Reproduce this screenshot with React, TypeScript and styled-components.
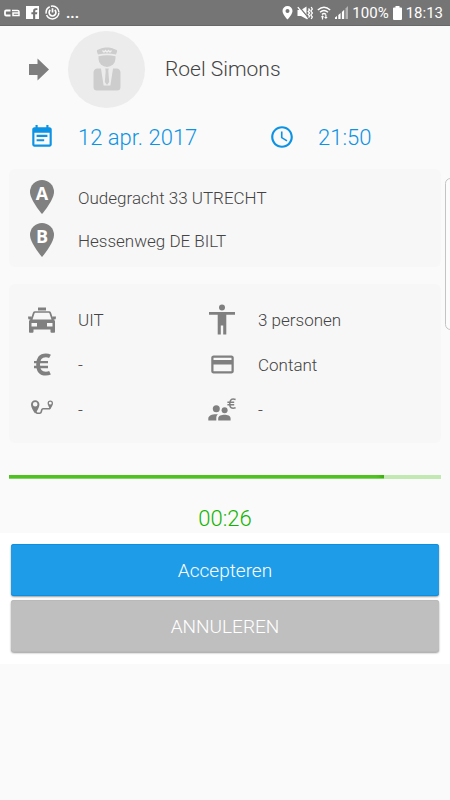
import React from 'react';
import styled, { createGlobalStyle } from 'styled-components';

const GlobalStyle = createGlobalStyle`
  *, *::before, *::after { box-sizing: border-box; }
  body {
    margin: 0;
    background: #fafafa;
    color: #444;
    font-family: Roboto, "Liberation Sans", sans-serif;
    font-weight: 300;
  }
`;

const Screen = styled.div`
  position: relative;
  min-height: 100vh;
  overflow: hidden;
`;

const StatusBar = styled.header`
  display: flex;
  align-items: center;
  justify-content: space-between;
  height: 26px;
  padding: 0 7px 0 4px;
  background: #757575;
  border-bottom: 1px solid #686868;
  color: #fff;
  font-size: 15px;
  font-weight: 400;
`;

const StatusGroup = styled.div<{ $gap: number }>`
  display: flex;
  align-items: center;
  gap: ${(p) => p.$gap}px;
`;

const Dots = styled.span`
  font-weight: 700;
  line-height: 16px;
`;

const Content = styled.main`
  padding: 0 9px;
`;

const Driver = styled.section`
  display: flex;
  align-items: center;
  height: 86px;
`;

const ArrowButton = styled.button`
  display: flex;
  justify-content: center;
  width: 59px;
  padding: 0;
  border: 0;
  background: none;
`;

const Avatar = styled.div`
  display: flex;
  align-items: center;
  justify-content: center;
  width: 77px;
  height: 77px;
  border-radius: 50%;
  background: #ececec;
`;

const DriverName = styled.h1`
  margin: 0 0 0 20px;
  font-size: 21px;
  font-weight: 300;
`;

const When = styled.section`
  display: grid;
  grid-template-columns: 5fr 4fr;
  height: 50px;
  margin-bottom: 7px;
  color: #0c93e4;
  font-size: 22px;
`;

const Panel = styled.section`
  margin-bottom: 17px;
  padding: 7px 0 5px;
  border-radius: 6px;
  background: #f7f7f7;
  font-size: 17px;
`;

const Details = styled(Panel)`
  display: grid;
  grid-template-columns: 5fr 7fr;
  margin-bottom: 32px;
  padding: 13px 0 11px;
`;

const Item = styled.div<{ $height: number }>`
  display: flex;
  align-items: center;
  gap: 3px;
  height: ${(p) => p.$height}px;
  white-space: nowrap;
`;

const IconCell = styled.span`
  display: flex;
  flex: none;
  align-items: center;
  justify-content: center;
  width: 66px;
`;

const PinLetter = styled.text`
  fill: #fff;
  font-family: "Open Sans", sans-serif;
  font-size: 18px;
  font-weight: 700;
  text-anchor: middle;
`;

const Track = styled.div`
  height: 4px;
  background: #c2e9b2;
`;

const Fill = styled.div`
  height: 4px;
  border-bottom: 1px solid #84d36a;
  background: #51c421;
  box-shadow: inset -6px 0 5px -3px #38ad0c;
`;

const Countdown = styled.p`
  margin: 0;
  padding-top: 27px;
  height: 54px;
  color: #12b400;
  font-size: 22px;
  line-height: 26px;
  text-align: center;
`;

const Actions = styled.footer`
  display: flex;
  flex-direction: column;
  gap: 4px;
  padding: 11px 11px 12px;
  background: #fff;
`;

const ActionButton = styled.button<{ $color: string; $edge: string }>`
  height: 52px;
  padding: 0;
  border: 0;
  border-radius: 3px;
  background: ${(p) => p.$color};
  box-shadow: inset 0 1px 0 ${(p) => p.$edge}, inset 0 -1px 0 ${(p) => p.$edge},
    0 1px 2px rgba(0, 0, 0, 0.4);
  color: #fff;
  font-family: inherit;
  font-size: 19px;
  font-weight: 300;
`;

const EdgeHandle = styled.div`
  position: absolute;
  top: 178px;
  right: -6px;
  width: 11px;
  height: 152px;
  border: 1px solid #c4c4c4;
  border-radius: 6px;
  background: #fcfcfc;
`;

const GREY = '#808080';

const StatusLogo = () => (
  <svg width="16" height="8" viewBox="0 0 16 8" fill="none" stroke="#fff" strokeWidth="1.8">
    <path d="M6.5 1.5H2.2Q1 1.5 1 2.7V5.2Q1 6.5 2.2 6.5H6.5" />
    <path d="M8 1.5H13.5Q15 1.5 15 2.8V6.5H9V4H15" strokeWidth="1.5" />
  </svg>
);

const FacebookIcon = () => (
  <svg width="13" height="13" viewBox="0 0 13 13">
    <path d="M0 0H13V13H9.2V8.3H11L11.3 6.3H9.2V5Q9.2 4 10.2 4H11.4V2.2H9.8Q7.1 2.2 7.1 4.9V6.3H5.4V8.3H7.1V13H0Z" fill="#fff" />
  </svg>
);

const PowerIcon = () => (
  <svg width="15" height="15" viewBox="0 0 15 15" fill="none" stroke="#fff">
    <circle cx="7.5" cy="7.5" r="6.4" strokeWidth="1.5" strokeDasharray="17 1.5 8 1.2 11 1.5" />
    <path d="M5.3 5A3.4 3.4 0 1 0 9.7 5M7.5 3.2V7.5" strokeWidth="1.7" />
  </svg>
);

const LocationIcon = () => (
  <svg width="11" height="14" viewBox="0 0 11 14">
    <path fillRule="evenodd" fill="#fff" d="M5.5 0A5 5 0 0 0 .5 5C.5 8.5 5.5 13.5 5.5 13.5S10.5 8.5 10.5 5A5 5 0 0 0 5.5 0ZM5.5 3A2 2 0 1 1 5.5 7A2 2 0 0 1 5.5 3Z" />
  </svg>
);

const MuteIcon = () => (
  <svg width="16" height="14" viewBox="0 0 16 14">
    <path d="M.5 4H4L9.5 .5V13L4 10H.5Z" fill="#fff" />
    <path d="M2 .5L11 11.5" stroke="#757575" strokeWidth="1.3" />
    <path d="M.8 1.2L10.5 13" stroke="#fff" strokeWidth="1.3" />
    <path d="M11.5 2.5L12.6 4L11.2 5.5L12.6 7L11.2 8.5L12.6 10L11.5 11.5M14.2 1L15.3 3L13.9 5L15.3 7L13.9 9L15.3 11L14.2 13" fill="none" stroke="#fff" strokeWidth="1.3" />
  </svg>
);

const WifiIcon = () => (
  <svg width="14" height="14" viewBox="0 0 14 14" fill="none" stroke="#fff" strokeWidth="1.4">
    <path d="M.8 4Q7-1.5 13.2 4M3 6.3Q7 2.8 11 6.3M5 8.4Q7 6.6 9 8.4" />
    <path d="M3.7 11.2L5.5 9.3L7.3 11.2ZM7.1 11L8.9 13L10.7 11Z" fill="#fff" stroke="none" />
    <path d="M5.5 10V13.5M8.9 8.8V12" strokeWidth="1.2" />
  </svg>
);

const SignalIcon = () => (
  <svg width="13" height="13" viewBox="0 0 13 13" fill="#fff">
    <path d="M0 13V11.5L2 10V13ZM3.3 13V9L5.6 7V13ZM6.9 13V6L9.2 3.8V13Z" />
    <path d="M10.5 13V2.5L13 0V13Z" opacity=".45" />
  </svg>
);

const BatteryIcon = () => (
  <svg width="9" height="14" viewBox="0 0 9 14">
    <path d="M2.5 0H6.5V1.5H8Q9 1.5 9 2.5V13Q9 14 8 14H1Q0 14 0 13V2.5Q0 1.5 1 1.5H2.5Z" fill="#fff" />
  </svg>
);

const ArrowIcon = () => (
  <svg width="20" height="23" viewBox="0 0 20 23">
    <path d="M0 6H8.5V.5L20 11.5L8.5 22.5V17H0Z" fill="#7e7e7e" />
  </svg>
);

const ChauffeurIcon = () => (
  <svg width="28" height="44" viewBox="0 0 28 44" fill="#cdcdcd">
    <path d="M14 .5C19 .5 20.5 2 23.3 2.8C24.5 3.2 24.3 4.5 23 7.5Q14 5.5 5 7.5C3.7 4.5 3.5 3.2 4.7 2.8C7.5 2 9 .5 14 .5Z" />
    <path d="M9.5 3.5L11 5.2L12.5 3.5L14 5.2L15.5 3.5L17 5.2L18.5 3.5" fill="none" stroke="#efefef" strokeWidth="1.2" />
    <path d="M5.5 9.2Q14 7.5 22.5 9.2V11.5A8.5 8.5 0 0 1 5.5 11.5Z" />
    <path d="M4 21.5H8L10.6 38.5H17.4L20 21.5H24Q27.5 22 27.5 26V40Q27.5 43.5 24 43.5H4Q.5 43.5 .5 40V26Q.5 22 4 21.5Z" />
    <path d="M12.3 21.5H15.7L15.3 24L16.2 35L14 38L11.8 35L12.7 24Z" />
  </svg>
);

const CalendarIcon = () => (
  <svg width="26" height="26" viewBox="0 0 24 24" fill="#0c93e4">
    <path d="M17 10H7v2h10v-2zm2-7h-1V1h-2v2H8V1H6v2H5c-1.11 0-1.99.9-1.99 2L3 19c0 1.1.89 2 2 2h14c1.1 0 2-.9 2-2V5c0-1.1-.9-2-2-2zm0 16H5V8h14v11zm-5-5H7v2h7v-2z" />
  </svg>
);

const ClockIcon = () => (
  <svg width="26" height="26" viewBox="0 0 24 24" fill="#0c93e4">
    <path d="M11.99 2C6.47 2 2 6.48 2 12s4.47 10 9.99 10C17.52 22 22 17.52 22 12S17.52 2 11.99 2zM12 20c-4.42 0-8-3.58-8-8s3.58-8 8-8 8 3.58 8 8-3.58 8-8 8zm.5-13H11v6l5.25 3.15.75-1.23-4.5-2.67z" />
  </svg>
);

const PinIcon = ({ letter }: { letter: string }) => (
  <svg width="24" height="36" viewBox="0 0 24 36">
    <path d="M12 0A12 12 0 0 0 0 12C0 20 12 34 12 34S24 20 24 12A12 12 0 0 0 12 0Z" fill={GREY} />
    <PinLetter x="12" y="20">{letter}</PinLetter>
  </svg>
);

const TaxiIcon = () => (
  <svg width="28" height="26" viewBox="0 0 28 26" fill={GREY}>
    <path d="M10 .5H18V3.5H10Z" />
    <path fillRule="evenodd" d="M7 4.3H21Q22.5 4.3 23 5.6L25 11.5L27 14V25Q27 25.7 26.2 25.7H23.5Q22.5 25.7 22.5 24.7V22.5H5.5V24.7Q5.5 25.7 4.5 25.7H1.8Q1 25.7 1 25V14L3 11.5L5 5.6Q5.5 4.3 7 4.3ZM7.3 5.8Q6.7 5.8 6.5 6.4L4.5 12.4H23.5L21.5 6.4Q21.3 5.8 20.7 5.8ZM3.5 16V19.5H9V16ZM19 16V19.5H24.5V16Z" />
    <path d="M0 9.5H3.5L4 11.3L2.8 12.5H1Q0 12 0 9.5ZM28 9.5H24.5L24 11.3L25.2 12.5H27Q28 12 28 9.5Z" />
  </svg>
);

const EuroIcon = () => (
  <svg width="18" height="23" viewBox="0 0 18 23" fill="none" stroke={GREY} strokeWidth="3.8">
    <path d="M17 3.3Q15.2 2.3 12.8 2.3C7.5 2.3 5.1 5.9 5.1 11.5S7.5 20.7 12.8 20.7Q15.2 20.7 17 19.8" />
    <path d="M1 9.2H15M1 14H15" strokeWidth="2.3" />
  </svg>
);

const RouteIcon = () => (
  <svg width="22" height="20" viewBox="0 0 22 20" fill={GREY}>
    <path fillRule="evenodd" d="M4.2 .2A4.2 4.2 0 0 0 0 4.4C0 8 4.2 13.5 4.2 13.5S8.4 8 8.4 4.4A4.2 4.2 0 0 0 4.2 .2ZM4.2 2A2.3 2.3 0 1 1 4.2 6.6A2.3 2.3 0 0 1 4.2 2Z" />
    <path fillRule="evenodd" d="M19.3 .5A2.7 2.7 0 0 0 16.6 3.2C16.6 5.5 19.3 8.8 19.3 8.8S22 5.5 22 3.2A2.7 2.7 0 0 0 19.3 .5ZM19.3 1.8A1.4 1.4 0 1 1 19.3 4.6A1.4 1.4 0 0 1 19.3 1.8Z" />
    <path d="M4.5 11.5L6 13.2H8.7Q9.9 13.2 10.2 12L10.8 9.8Q11.1 8.8 12 8.8H18.5L19.3 7.5" fill="none" stroke={GREY} strokeWidth="1.6" />
  </svg>
);

const PersonIcon = () => (
  <svg width="26" height="31" viewBox="0 0 26 31" fill={GREY}>
    <circle cx="13" cy="3.5" r="3" />
    <path d="M0 8H26V10.8H17.3V30.5H14.2V21.5H11.8V30.5H8.7V10.8H0Z" />
  </svg>
);

const CardIcon = () => (
  <svg width="27" height="27" viewBox="0 0 24 24" fill={GREY}>
    <path d="M20 4H4c-1.11 0-1.99.89-1.99 2L2 18c0 1.11.89 2 2 2h16c1.11 0 2-.89 2-2V6c0-1.11-.89-2-2-2zm0 14H4v-6h16v6zm0-10H4V6h16v2z" />
  </svg>
);

const SharedCostIcon = () => (
  <svg width="28" height="24" viewBox="0 0 28 24" fill={GREY}>
    <circle cx="8.3" cy="10.8" r="3.5" />
    <circle cx="16.6" cy="12.2" r="3" />
    <path d="M.3 22.5V20.5C.3 17.3 5 15.8 10 16.3C8.6 17.3 8.3 18.5 8.3 20V22.5ZM10.2 22.5V20.5C10.2 17.8 13.5 16.8 16.5 16.8S22.6 17.8 22.6 20.5V22.5Z" />
    <path d="M27.6 1.5Q22.2-.6 21.8 5.5T27.6 9.8M19.4 4.3H26.2M19.4 6.8H26.2" fill="none" stroke={GREY} strokeWidth="1.5" />
  </svg>
);

interface FieldProps {
  icon: React.ReactNode;
  height: number;
  children: React.ReactNode;
}

const Field = ({ icon, height, children }: FieldProps) => (
  <Item $height={height}>
    <IconCell aria-hidden="true">{icon}</IconCell>
    <span>{children}</span>
  </Item>
);

export default function App() {
  const progress = 86.8;
  return (
    <>
      <GlobalStyle />
      <Screen>
        <StatusBar>
          <StatusGroup $gap={6}>
            <StatusLogo />
            <FacebookIcon />
            <PowerIcon />
            <Dots>...</Dots>
          </StatusGroup>
          <StatusGroup $gap={4}>
            <LocationIcon />
            <MuteIcon />
            <WifiIcon />
            <SignalIcon />
            <span>100%</span>
            <BatteryIcon />
            <span>18:13</span>
          </StatusGroup>
        </StatusBar>

        <Content>
          <Driver>
            <ArrowButton type="button" aria-label="Verder">
              <ArrowIcon />
            </ArrowButton>
            <Avatar>
              <ChauffeurIcon />
            </Avatar>
            <DriverName>Roel Simons</DriverName>
          </Driver>

          <When>
            <Field height={50} icon={<CalendarIcon />}>12 apr. 2017</Field>
            <Field height={50} icon={<ClockIcon />}>21:50</Field>
          </When>

          <Panel>
            <Field height={43} icon={<PinIcon letter="A" />}>Oudegracht 33 UTRECHT</Field>
            <Field height={43} icon={<PinIcon letter="B" />}>Hessenweg DE BILT</Field>
          </Panel>

          <Details>
            <Field height={45} icon={<TaxiIcon />}>UIT</Field>
            <Field height={45} icon={<PersonIcon />}>3 personen</Field>
            <Field height={45} icon={<EuroIcon />}>-</Field>
            <Field height={45} icon={<CardIcon />}>Contant</Field>
            <Field height={45} icon={<RouteIcon />}>-</Field>
            <Field height={45} icon={<SharedCostIcon />}>-</Field>
          </Details>

          <Track role="progressbar" aria-label="Resterende tijd" aria-valuenow={progress} aria-valuemin={0} aria-valuemax={100}>
            <Fill style={{ width: `${progress}%` }} />
          </Track>
          <Countdown>00:26</Countdown>
        </Content>

        <Actions>
          <ActionButton type="button" $color="#1e9ce8" $edge="#0b8fe0">Accepteren</ActionButton>
          <ActionButton type="button" $color="#bfbfbf" $edge="#b9b9b9">ANNULEREN</ActionButton>
        </Actions>
        <EdgeHandle />
      </Screen>
    </>
  );
}
